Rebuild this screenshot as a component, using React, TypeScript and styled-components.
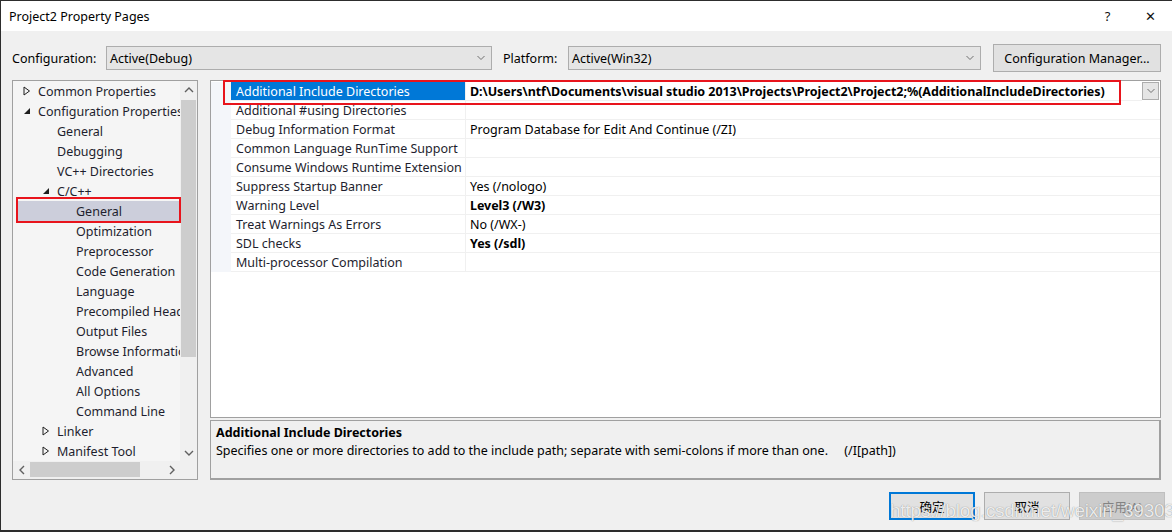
import React from "react";
import styled, { createGlobalStyle, css } from "styled-components";

const GlobalStyle = createGlobalStyle`
  html, body { margin: 0; padding: 0; background: #f0f0f0; }
  body { font-family: "Noto Sans", "Noto Sans CJK SC", sans-serif; font-size: 12px; color: #1e1e1e; }
  * { box-sizing: border-box; }
`;

const Window = styled.div`
  position: relative;
  width: 1172px;
  height: 532px;
  background: #f0f0f0;
  border-top: 1px solid #2d2d2d;
  border-left: 1px solid #2d2d2d;
  border-bottom: 2px solid #2d2d2d;
  display: flex;
  flex-direction: column;
  overflow: hidden;
`;

const TitleBar = styled.div`
  height: 30px;
  flex: none;
  background: #ffffff;
  display: flex;
  align-items: center;
  padding-left: 8px;
  font-size: 12.5px;
  color: #000;
`;

const Title = styled.div`
  flex: 1;
`;

const TitleButton = styled.div`
  width: 43px;
  height: 30px;
  display: flex;
  align-items: center;
  justify-content: center;
  font-size: 13px;
  color: #111;
`;

const Body = styled.div`
  flex: 1;
  display: flex;
  flex-direction: column;
  padding: 13px 11px 0 11px;
`;

const ConfigRow = styled.div`
  display: flex;
  align-items: center;
  height: 28px;
`;

const Label = styled.div<{ $w: number; $indent?: number }>`
  width: ${(p) => p.$w}px;
  padding-left: ${(p) => p.$indent ?? 0}px;
  font-size: 12.5px;
  color: #000;
`;

const Combo = styled.div<{ $w: number }>`
  width: ${(p) => p.$w}px;
  height: 24px;
  background: #e5e5e5;
  border: 1px solid #adadad;
  display: flex;
  align-items: center;
  padding-left: 3px;
  font-size: 12.5px;
  color: #000;
`;

const ComboText = styled.div`
  flex: 1;
`;

const ComboArrow = styled.div`
  width: 20px;
  display: flex;
  align-items: center;
  justify-content: center;
`;

const Spacer = styled.div<{ $w: number }>`
  width: ${(p) => p.$w}px;
  flex: none;
`;

const PushButton = styled.div<{ $w: number; $primary?: boolean; $disabled?: boolean }>`
  width: ${(p) => p.$w}px;
  height: 28px;
  background: ${(p) => (p.$disabled ? "#cccccc" : "#e1e1e1")};
  border: 1px solid ${(p) => (p.$disabled ? "#bfbfbf" : "#adadad")};
  display: flex;
  align-items: center;
  justify-content: center;
  font-size: 12.5px;
  color: ${(p) => (p.$disabled ? "#838383" : "#000")};
  ${(p) =>
    p.$primary &&
    css`
      border: 2px solid #0078d7;
    `}
`;

const Main = styled.div`
  display: flex;
  gap: 12px;
  margin-top: 8px;
  height: 400px;
`;

const TreePanel = styled.div`
  position: relative;
  width: 186px;
  height: 400px;
  border: 1px solid #a0a0a0;
  display: grid;
  grid-template-columns: 167px 17px;
  grid-template-rows: 380px 17px;
  background: #f0f0f0;
`;

const TreeList = styled.div`
  background: #f5f5f5;
  overflow: hidden;
`;

const TreeRow = styled.div<{ $level: number; $selected?: boolean }>`
  height: 20px;
  margin-left: 3px;
  display: flex;
  align-items: center;
  padding-left: ${(p) => 3 + p.$level * 19}px;
  white-space: nowrap;
  font-size: 12.5px;
  color: #1e1e2e;
  background: ${(p) => (p.$selected ? "#cccedb" : "transparent")};
`;

const Expander = styled.div`
  width: 19px;
  flex: none;
  display: flex;
  align-items: center;
  justify-content: flex-start;
  padding-left: 4px;
`;

const VScroll = styled.div`
  background: #f0f0f0;
  display: flex;
  flex-direction: column;
  align-items: center;
`;

const ScrollArrow = styled.div`
  height: 17px;
  width: 17px;
  display: flex;
  align-items: center;
  justify-content: center;
  flex: none;
`;

const VThumb = styled.div`
  width: 15px;
  height: 257px;
  background: #cdcdcd;
  margin-top: 2px;
`;

const Fill = styled.div`
  flex: 1;
`;

const HScroll = styled.div`
  background: #f0f0f0;
  display: flex;
  align-items: center;
`;

const HThumb = styled.div`
  width: 110px;
  height: 15px;
  background: #cdcdcd;
`;

const Corner = styled.div`
  background: #f0f0f0;
`;

const RightColumn = styled.div`
  width: 952px;
  display: flex;
  flex-direction: column;
  gap: 2px;
`;

const Grid = styled.div`
  position: relative;
  height: 339px;
  background: #ffffff;
  border: 1px solid #a0a0a0;
  padding-top: 1px;
`;

const GridRow = styled.div`
  display: flex;
  height: 19px;
`;

const Gutter = styled.div`
  width: 20px;
  flex: none;
  background: #f4f6fa;
`;

const NameCell = styled.div<{ $selected?: boolean }>`
  width: 235px;
  flex: none;
  display: flex;
  align-items: center;
  padding-left: 5px;
  border-bottom: 1px solid #f0f0f0;
  border-right: 1px solid #f0f0f0;
  white-space: nowrap;
  overflow: hidden;
  font-size: 12.5px;
  background: ${(p) => (p.$selected ? "#0078d7" : "#ffffff")};
  color: ${(p) => (p.$selected ? "#ffffff" : "#1e1e2e")};
`;

const ValueCell = styled.div<{ $bold?: boolean }>`
  flex: 1;
  display: flex;
  align-items: center;
  padding-left: 4px;
  border-bottom: 1px solid #f0f0f0;
  white-space: nowrap;
  overflow: hidden;
  font-size: 12.5px;
  letter-spacing: ${(p) => (p.$bold ? "-0.05px" : "0")};
  font-weight: ${(p) => (p.$bold ? 700 : 400)};
  color: #000;
`;

const DropButton = styled.div`
  width: 17px;
  height: 18px;
  flex: none;
  margin-right: 1px;
  background: #e5e5e5;
  border: 1px solid #adadad;
  display: flex;
  align-items: center;
  justify-content: center;
`;

const Annot = styled.div<{ $l: number; $t: number; $w: number; $h: number }>`
  position: absolute;
  left: ${(p) => p.$l}px;
  top: ${(p) => p.$t}px;
  width: ${(p) => p.$w}px;
  height: ${(p) => p.$h}px;
  border: 2px solid #e8141c;
  pointer-events: none;
`;

const Description = styled.div`
  height: 60px;
  border: 1px solid #a0a0a0;
  border-bottom-width: 2px;
  border-right-width: 2px;
  background: #f0f0f0;
  padding: 3px 5px;
`;

const DescTitle = styled.div`
  font-weight: 700;
  font-size: 12.5px;
  color: #000;
  height: 18px;
  line-height: 18px;
`;

const DescText = styled.div`
  font-size: 12.5px;
  color: #000;
  height: 18px;
  line-height: 18px;
  white-space: pre;
`;

const ButtonRow = styled.div`
  display: flex;
  justify-content: flex-end;
  gap: 9px;
  margin-top: 12px;
  margin-right: -4px;
`;

const Watermark = styled.div`
  position: absolute;
  left: 889px;
  top: 499px;
  font-family: "Liberation Sans", Arial, sans-serif;
  font-size: 19px;
  color: rgba(255, 255, 255, 0.85);
  text-shadow: 0 0 1px rgba(80, 80, 80, 0.7);
  letter-spacing: -0.2px;
  pointer-events: none;
  white-space: nowrap;
`;

const Chevron = ({ dir = "down", color = "#606060" }: { dir?: "down" | "up" | "left" | "right"; color?: string }) => {
  const pts: Record<string, string> = {
    down: "1,3 5,7 9,3",
    up: "1,7 5,3 9,7",
    left: "7,1 3,5 7,9",
    right: "3,1 7,5 3,9",
  };
  return (
    <svg width="10" height="10" viewBox="0 0 10 10">
      <polyline points={pts[dir]} fill="none" stroke={color} strokeWidth="1.4" />
    </svg>
  );
};

const SmallDown = () => (
  <svg width="10" height="8" viewBox="0 0 10 8">
    <polyline points="1.5,2 5,5.5 8.5,2" fill="none" stroke="#707070" strokeWidth="1" />
  </svg>
);

const Arrow = ({ expanded }: { expanded: boolean }) =>
  expanded ? (
    <svg width="8" height="8" viewBox="0 0 8 8">
      <polygon points="7,1 7,7 1,7" fill="#1e1e1e" />
    </svg>
  ) : (
    <svg width="8" height="10" viewBox="0 0 8 10">
      <polygon points="1,1 6.5,5 1,9" fill="none" stroke="#1e1e1e" strokeWidth="1" />
    </svg>
  );

type TreeItem = { label: string; level: number; expander?: "open" | "closed"; selected?: boolean };

const tree: TreeItem[] = [
  { label: "Common Properties", level: 0, expander: "closed" },
  { label: "Configuration Properties", level: 0, expander: "open" },
  { label: "General", level: 1 },
  { label: "Debugging", level: 1 },
  { label: "VC++ Directories", level: 1 },
  { label: "C/C++", level: 1, expander: "open" },
  { label: "General", level: 2, selected: true },
  { label: "Optimization", level: 2 },
  { label: "Preprocessor", level: 2 },
  { label: "Code Generation", level: 2 },
  { label: "Language", level: 2 },
  { label: "Precompiled Headers", level: 2 },
  { label: "Output Files", level: 2 },
  { label: "Browse Information", level: 2 },
  { label: "Advanced", level: 2 },
  { label: "All Options", level: 2 },
  { label: "Command Line", level: 2 },
  { label: "Linker", level: 1, expander: "closed" },
  { label: "Manifest Tool", level: 1, expander: "closed" },
];

type Prop = { name: string; value: string; bold?: boolean; selected?: boolean };

const props: Prop[] = [
  {
    name: "Additional Include Directories",
    value: "D:\\Users\\ntf\\Documents\\visual studio 2013\\Projects\\Project2\\Project2;%(AdditionalIncludeDirectories)",
    bold: true,
    selected: true,
  },
  { name: "Additional #using Directories", value: "" },
  { name: "Debug Information Format", value: "Program Database for Edit And Continue (/ZI)" },
  { name: "Common Language RunTime Support", value: "" },
  { name: "Consume Windows Runtime Extension", value: "" },
  { name: "Suppress Startup Banner", value: "Yes (/nologo)" },
  { name: "Warning Level", value: "Level3 (/W3)", bold: true },
  { name: "Treat Warnings As Errors", value: "No (/WX-)" },
  { name: "SDL checks", value: "Yes (/sdl)", bold: true },
  { name: "Multi-processor Compilation", value: "" },
];

export default function App() {
  return (
    <>
      <GlobalStyle />
      <Window>
        <TitleBar>
          <Title>Project2 Property Pages</Title>
          <TitleButton>?</TitleButton>
          <TitleButton>✕</TitleButton>
        </TitleBar>
        <Body>
          <ConfigRow>
            <Label $w={94}>Configuration:</Label>
            <Combo $w={386}>
              <ComboText>Active(Debug)</ComboText>
              <ComboArrow>
                <SmallDown />
              </ComboArrow>
            </Combo>
            <Label $w={76} $indent={11}>
              Platform:
            </Label>
            <Combo $w={413}>
              <ComboText>Active(Win32)</ComboText>
              <ComboArrow>
                <SmallDown />
              </ComboArrow>
            </Combo>
            <Spacer $w={12} />
            <PushButton $w={168}>Configuration Manager...</PushButton>
          </ConfigRow>
          <Main>
            <TreePanel>
              <TreeList>
                {tree.map((t, i) => (
                  <TreeRow key={i} $level={t.level} $selected={t.selected}>
                    <Expander>{t.expander && <Arrow expanded={t.expander === "open"} />}</Expander>
                    {t.label}
                  </TreeRow>
                ))}
              </TreeList>
              <VScroll>
                <ScrollArrow>
                  <Chevron dir="up" />
                </ScrollArrow>
                <VThumb />
                <Fill />
                <ScrollArrow>
                  <Chevron dir="down" />
                </ScrollArrow>
              </VScroll>
              <HScroll>
                <ScrollArrow>
                  <Chevron dir="left" />
                </ScrollArrow>
                <HThumb />
                <Fill />
                <ScrollArrow>
                  <Chevron dir="right" />
                </ScrollArrow>
              </HScroll>
              <Corner />
              <Annot $l={3} $t={116} $w={165} $h={26} />
            </TreePanel>
            <RightColumn>
              <Grid>
                {props.map((p, i) => (
                  <GridRow key={i}>
                    <Gutter />
                    <NameCell $selected={p.selected}>{p.name}</NameCell>
                    <ValueCell $bold={p.bold}>{p.value}</ValueCell>
                    {p.selected && (
                      <DropButton>
                        <SmallDown />
                      </DropButton>
                    )}
                  </GridRow>
                ))}
                <Annot $l={12} $t={-1} $w={898} $h={25} />
              </Grid>
              <Description>
                <DescTitle>Additional Include Directories</DescTitle>
                <DescText>
                  {"Specifies one or more directories to add to the include path; separate with semi-colons if more than one.     (/I[path])"}
                </DescText>
              </Description>
            </RightColumn>
          </Main>
          <ButtonRow>
            <PushButton $w={86} $primary>
              确定
            </PushButton>
            <PushButton $w={86}>取消</PushButton>
            <PushButton $w={86} $disabled>
              应用(A)
            </PushButton>
          </ButtonRow>
        </Body>
        <Watermark>https://blog.csdn.net/weixin_39303983</Watermark>
      </Window>
    </>
  );
}
